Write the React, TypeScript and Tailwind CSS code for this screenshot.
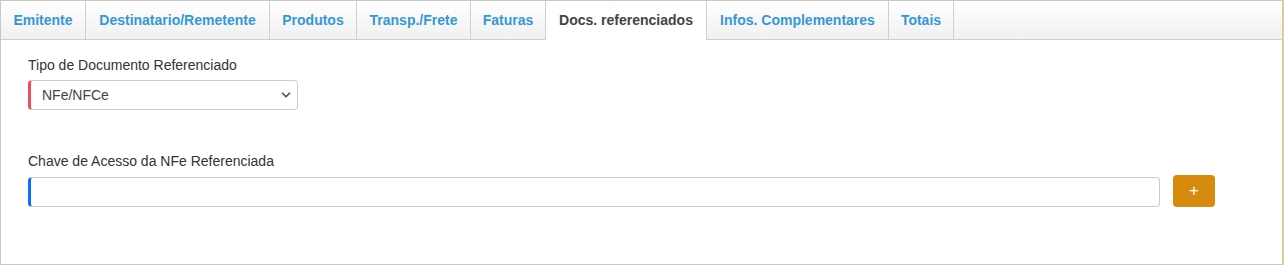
import { ChevronDown } from 'lucide-react';

const tabs = [
  { label: 'Emitente', w: 'w-[85px]' },
  { label: 'Destinatario/Remetente', w: 'w-[184px]' },
  { label: 'Produtos', w: 'w-[87px]' },
  { label: 'Transp./Frete', w: 'w-[114px]' },
  { label: 'Faturas', w: 'w-[75px]' },
  { label: 'Docs. referenciados', w: 'w-[161px]' },
  { label: 'Infos. Complementares', w: 'w-[182px]' },
  { label: 'Totais', w: 'w-[65px]' },
];

const ACTIVE = 'Docs. referenciados';

export default function App() {
  return (
    <div className="flex h-[265px] w-[1284px] bg-white font-['Liberation_Sans',Arial,sans-serif]">
      <div className="flex flex-1 flex-col border border-[#c8c8c8]">
        <div className="flex h-[39px] bg-gradient-to-b from-white to-[#f0f0f0]">
          {tabs.map((tab) => (
            <div
              key={tab.label}
              className={
                tab.label === ACTIVE
                  ? `flex ${tab.w} items-center justify-center border-r border-[#cfcfcf] bg-white text-[14px] font-bold text-[#444]`
                  : `flex ${tab.w} items-center justify-center border-r border-b border-[#cfcfcf] text-[14px] font-bold text-[#3598d6]`
              }
            >
              {tab.label}
            </div>
          ))}
          <div className="flex-1 border-b border-[#cfcfcf]" />
        </div>

        <div className="flex flex-col pl-[27px] pt-[15px]">
          <label className="text-[14px] leading-5 text-[#333]">Tipo de Documento Referenciado</label>
          <div className="mt-[5px] flex h-[30px] w-[270px] items-center justify-between rounded-[4px] border border-l-[3px] border-[#ccc] border-l-[#e8505b] pl-[11px] pr-[4px] text-[14px] text-[#444]">
            <span>NFe/NFCe</span>
            <ChevronDown className="h-[14px] w-[14px] text-[#555]" strokeWidth={3} />
          </div>

          <label className="mt-[41px] text-[14px] leading-5 text-[#333]">
            Chave de Acesso da NFe Referenciada
          </label>
          <div className="mt-[3px] flex items-center gap-[13px]">
            <div className="mt-[3px] h-[30px] w-[1132px] rounded-[4px] border border-l-[3px] border-[#ccc] border-l-[#0d6efd]" />
            <button className="flex h-[32px] w-[42px] items-center justify-center rounded-[4px] bg-[#d68b0e] text-[17px] text-white">
              +
            </button>
          </div>
        </div>
      </div>
      <div className="w-px bg-[#e6d277]" />
    </div>
  );
}
